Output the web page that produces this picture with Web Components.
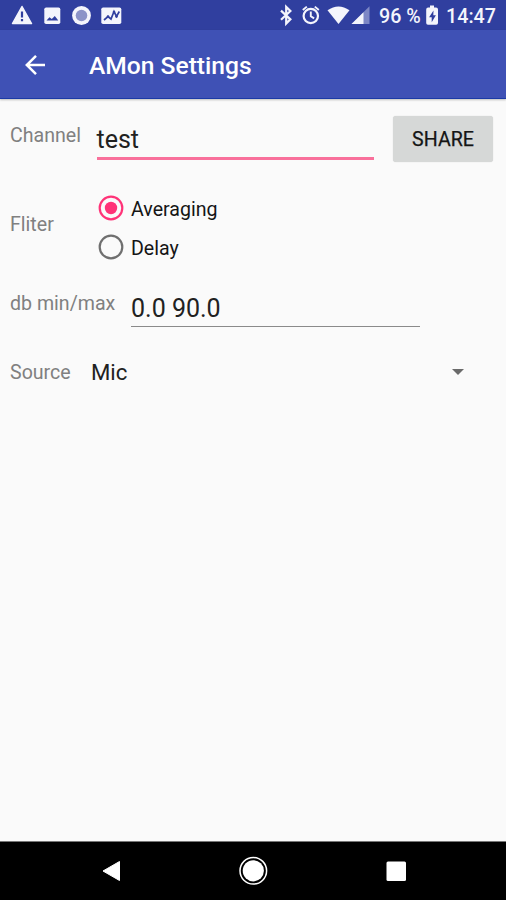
<!DOCTYPE html>
<html lang="en">
<head>
<meta charset="utf-8">
<title>AMon Settings</title>
<style>
    html, body {
        margin: 0;
        height: 100%;
    }

    body {
        font-family: Roboto, sans-serif;
        background: #fafafa;
        overflow: hidden;
    }
</style>
</head>
<body>
<amon-settings></amon-settings>

<script>
(function() {

    // registers an element that clones the given markup into its shadow root
    function define(name, html) {
        const template = document.createElement('template')
        template.innerHTML = html

        window.customElements.define(name, class extends HTMLElement {
            constructor() {
                super()

                this.attachShadow({mode: 'open'})
                this.shadowRoot.appendChild(template.content.cloneNode(true))
            }
        })
    }

    define('status-bar', `
        <style>
            :host {
                display: flex;
                justify-content: space-between;
                height: 30px;
                background: #303f9f;
                color: #f4f5fc;
                font-size: 19.7px;
                font-weight: 500;
                line-height: 34px;
                white-space: nowrap;
            }
            svg { display: block; }
            .right { display: flex; }
            .percent { width: 46px; }
            .time { width: 60px; }
        </style>
        <svg width="130" height="30" fill="#f4f5fc">
            <path d="M22 6.500L31.500 23.500H12.500z" stroke="#f4f5fc" stroke-width="1.500" stroke-linejoin="round"/>
            <path d="M20.900 11.500h2.200v6h-2.200zM20.900 19h2.200v2.200h-2.200z" fill="#303f9f"/>
            <rect x="44.300" y="7.500" width="16" height="16.500" rx="1.800"/>
            <path d="M46.500 20.500l3-3.300 2.300 1.800 3-3 3.500 4.500z" fill="#303f9f"/>
            <circle cx="81.500" cy="15.500" r="9.400"/>
            <circle cx="81.500" cy="15.500" r="5.800" fill="#8b93c8"/>
            <rect x="101.300" y="7.500" width="20" height="16.500" rx="1.800"/>
            <path d="M104 20l4-3.500 3 2.500 3-7.500 2.500 5 2.800-5" fill="none" stroke="#303f9f" stroke-width="1.700"/>
            <g fill="#303f9f">
                <circle cx="108" cy="16.500" r="1.300"/>
                <circle cx="114" cy="12" r="1.300"/>
                <circle cx="116.500" cy="16.500" r="1.300"/>
            </g>
        </svg>
        <div class="right">
            <svg width="101" height="30" viewBox="278 0 101 30" fill="none" stroke="#f4f5fc">
                <path d="M281 10.600l9.400 8.800-4.200 4.200V6.900l4.200 4.100-9.400 8.800" stroke-width="2.200"/>
                <circle cx="310.800" cy="16" r="7.200" stroke-width="2.200"/>
                <path d="M310.800 11.500v4.700l3.300 2.200M302.800 10l4-3.400M318.800 10l-4-3.400" stroke-width="1.900"/>
                <path d="M327.500 10.300Q338.500 2.500 349.500 10.300L338.500 24z" fill="#f4f5fc" stroke="none"/>
                <path d="M369.500 6.300V24H351.500z" fill="#7d87c5" stroke="none"/>
                <path d="M363.500 12.300V24H351.500z" fill="#f4f5fc" stroke="none"/>
            </svg>
            <span class="percent">96 %</span>
            <svg width="21" height="30" viewBox="425 0 21 30">
                <path d="M430 5.500h4v2h2q2 0 2 2V23q0 1.800-1.800 1.800h-8.200q-1.800 0-1.800-1.800V9.500q0-2 2-2h1.800z" fill="#f4f5fc"/>
                <path d="M433.500 10.500l-4.400 6.800h2.600v5l4.200-7h-2.600z" fill="#303f9f"/>
            </svg>
            <span class="time">14:47</span>
        </div>
    `)

    define('app-bar', `
        <style>
            :host {
                display: flex;
                align-items: center;
                box-sizing: border-box;
                height: 69px;
                padding: 4px 0 0 22px;
                background: #3f51b5;
                border-bottom: 1px solid #1b3aa6;
                box-shadow: 0 1px 2px rgba(0, 0, 0, .25);
                color: #fff;
                position: relative;
            }
            svg { display: block; margin: -3px 37px 0 0; }
            h1 { margin: 0; font-size: 24.6px; line-height: 30px; font-weight: 500; white-space: nowrap; }
        </style>
        <svg width="30" height="30" viewBox="22 50 30 30" fill="none" stroke="#fff" stroke-width="2.500">
            <path d="M45 65H27M36 55.800L26.800 65l9.200 9.200"/>
        </svg>
        <h1><slot></slot></h1>
    `)

    define('setting-row', `
        <style>
            :host {
                display: flex;
                align-items: flex-start;
                padding-left: 10px;
            }
            label {
                flex: none;
                width: var(--label-width);
                padding-top: var(--label-top);
                font-size: 19.6px;
                line-height: 24px;
                color: #808080;
                white-space: nowrap;
            }
        </style>
        <label><slot name="label"></slot></label>
        <slot></slot>
    `)

    define('text-field', `
        <style>
            :host {
                display: block;
                box-sizing: border-box;
                font-size: 25px;
                line-height: 30px;
                color: #212121;
                border-bottom: 1px solid #8a8a8a;
            }
            :host([active]) {
                border-bottom: 3px solid #f9709b;
            }
        </style>
        <slot></slot>
    `)

    define('raised-button', `
        <style>
            :host {
                display: flex;
                align-items: center;
                justify-content: center;
                box-sizing: border-box;
                padding-top: 2px;
                background: #d6d8d7;
                border-radius: 3px;
                box-shadow: 0 0 1px rgba(0, 0, 0, .2);
                font-size: 19.6px;
                -webkit-text-stroke: .25px #151515;
                color: #151515;
            }
        </style>
        <slot></slot>
    `)

    define('radio-option', `
        <style>
            :host {
                display: flex;
                align-items: center;
                gap: 7px;
                height: 39.500px;
                font-size: 19.6px;
                color: #151515;
            }
            svg { display: block; flex: none; margin-top: -2px; color: #6f6f6f; }
            span { padding-top: 1px; }
            .dot { display: none; }
            :host([checked]) svg { color: #ff3378; }
            :host([checked]) .dot { display: inline; }
        </style>
        <svg width="26" height="26" fill="none">
            <circle cx="13" cy="13" r="11.300" stroke="currentColor" stroke-width="2.200"/>
            <circle class="dot" cx="13" cy="13" r="6.200" fill="currentColor"/>
        </svg>
        <span><slot></slot></span>
    `)

    define('drop-down', `
        <style>
            :host {
                display: flex;
                align-items: center;
                justify-content: space-between;
                font-size: 22.200px;
                line-height: 28px;
                color: #212121;
            }
        </style>
        <span><slot></slot></span>
        <svg width="12" height="6"><path d="M0 0h12L6 6z" fill="#6a6a6a"/></svg>
    `)

    define('nav-bar', `
        <style>
            :host {
                display: block;
                height: 58px;
                background: #000;
                border-top: 1px solid #777;
            }
            svg { display: block; }
        </style>
        <svg width="506" height="58" viewBox="0 842 506 58" fill="#fff">
            <path d="M119.500 861.500v19L103 871z" stroke="#fff" stroke-linejoin="round"/>
            <circle cx="253.300" cy="870.800" r="10.600"/>
            <circle cx="253.300" cy="870.800" r="13.300" fill="none" stroke="#fff" stroke-width="1.500"/>
            <rect x="386.500" y="861.500" width="19.500" height="19.500" rx="1.500"/>
        </svg>
    `)

    define('amon-settings', `
        <style>
            :host {
                display: flex;
                flex-direction: column;
                height: 100vh;
            }
            main { flex: 1; }
            .channel { --label-width: 86.500px; --label-top: 25px; height: 85px; }
            .channel text-field { width: 277px; height: 46px; margin: 15px 19.500px 0 0; padding-top: 11px; }
            .channel raised-button { width: 100px; height: 46px; margin-top: 16.500px; }
            .filter { --label-width: 88px; --label-top: 29px; height: 90px; }
            .filter .options { padding-top: 5px; }
            .range { --label-width: 121px; --label-top: 18px; height: 73px; }
            .range text-field { width: 289px; height: 38px; margin-top: 15px; padding-top: 5px; }
            .source { --label-width: 81px; --label-top: 14px; height: 60px; }
            .source drop-down { width: 372.500px; padding-top: 11px; }
        </style>
        <status-bar></status-bar>
        <app-bar>AMon Settings</app-bar>
        <main>
            <setting-row class="channel">
                <span slot="label">Channel</span>
                <text-field active>test</text-field>
                <raised-button>SHARE</raised-button>
            </setting-row>
            <setting-row class="filter">
                <span slot="label">Fliter</span>
                <div class="options">
                    <radio-option checked>Averaging</radio-option>
                    <radio-option>Delay</radio-option>
                </div>
            </setting-row>
            <setting-row class="range">
                <span slot="label">db min/max</span>
                <text-field>0.0 90.0</text-field>
            </setting-row>
            <setting-row class="source">
                <span slot="label">Source</span>
                <drop-down>Mic</drop-down>
            </setting-row>
        </main>
        <nav-bar></nav-bar>
    `)
}())
</script>
</body>
</html>
